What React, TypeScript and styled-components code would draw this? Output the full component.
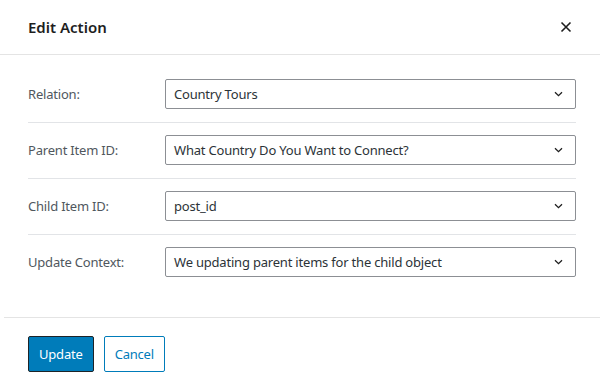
import styled, { createGlobalStyle } from "styled-components";

const GlobalStyle = createGlobalStyle`
  body {
    margin: 0;
    background: #ffffff;
    font-family: "Noto Sans", "Open Sans", sans-serif;
  }
`;

const fields = [
  { label: "Relation:", value: "Country Tours" },
  { label: "Parent Item ID:", value: "What Country Do You Want to Connect?" },
  { label: "Child Item ID:", value: "post_id" },
  { label: "Update Context:", value: "We updating parent items for the child object" },
];

const Chevron = () => (
  <svg width="9" height="6" viewBox="0 0 9 6" fill="none">
    <path d="M1 1.2L4.5 4.6L8 1.2" stroke="#1e1e1e" strokeWidth="1.3" />
  </svg>
);

const CloseIcon = () => (
  <svg width="12" height="12" viewBox="0 0 12 12" fill="none">
    <path d="M1.5 1.5L10.5 10.5M10.5 1.5L1.5 10.5" stroke="#1e1e1e" strokeWidth="1.6" />
  </svg>
);

export default function App() {
  return (
    <>
      <GlobalStyle />
      <Modal>
        <Header>
          <Title>Edit Action</Title>
          <CloseButton aria-label="Close">
            <CloseIcon />
          </CloseButton>
        </Header>
        <Body>
          {fields.map((field, i) => (
            <Row key={field.label} last={i === fields.length - 1} first={i === 0}>
              <Label>{field.label}</Label>
              <Select>
                <span>{field.value}</span>
                <Chevron />
              </Select>
            </Row>
          ))}
        </Body>
        <Footer>
          <PrimaryButton>Update</PrimaryButton>
          <SecondaryButton>Cancel</SecondaryButton>
        </Footer>
      </Modal>
    </>
  );
}

const Modal = styled.div`
  width: 600px;
  height: 390px;
  background: #ffffff;
  display: flex;
  flex-direction: column;
  letter-spacing: -0.2px;
`;

const Header = styled.div`
  height: 56px;
  padding: 0 24px 0 28px;
  display: flex;
  align-items: center;
  justify-content: space-between;
  border-bottom: 1px solid #e4e4e4;
`;

const Title = styled.h1`
  margin: 0;
  font-size: 15px;
  font-weight: 600;
  color: #1e1e1e;
  letter-spacing: 0;
`;

const CloseButton = styled.button`
  border: none;
  background: transparent;
  padding: 4px;
  display: flex;
  cursor: pointer;
`;

const Body = styled.div`
  padding: 24px 24px 27px 28px;
`;

const Row = styled.div<{ last: boolean; first: boolean }>`
  display: grid;
  grid-template-columns: 137px 1fr;
  align-items: center;
  padding: ${(p) => (p.first ? "0" : "12px")} 0 13px;
  border-bottom: ${(p) => (p.last ? "none" : "1px solid #e2e4e7")};
`;

const Label = styled.label`
  font-size: 13px;
  color: #50575e;
`;

const Select = styled.div`
  height: 30px;
  box-sizing: border-box;
  border: 1px solid #8c8f94;
  border-radius: 2px;
  padding: 0 12px 0 8px;
  display: flex;
  align-items: center;
  justify-content: space-between;
  font-size: 13px;
  color: #2c3338;
`;

const Footer = styled.div`
  border-top: 1px solid #e4e4e4;
  margin-left: 4px;
  padding: 18px 24px;
  display: flex;
  gap: 10px;
`;

const PrimaryButton = styled.button`
  height: 36px;
  padding: 0 10px;
  font-family: inherit;
  font-size: 13px;
  letter-spacing: -0.2px;
  color: #ffffff;
  background: #007cba;
  border: 1px solid #1d2327;
  border-radius: 2px;
  cursor: pointer;
`;

const SecondaryButton = styled.button`
  height: 36px;
  padding: 0 10px;
  font-family: inherit;
  font-size: 13px;
  letter-spacing: -0.2px;
  color: #007cba;
  background: #ffffff;
  border: 1px solid #007cba;
  border-radius: 2px;
  cursor: pointer;
`;
